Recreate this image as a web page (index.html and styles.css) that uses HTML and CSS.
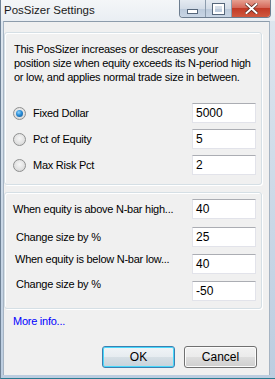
FILE: index.html
```html
<!DOCTYPE html>
<html lang="en">
<head>
    <meta charset="UTF-8">
    <title>PosSizer Settings</title>
    <link rel="stylesheet" href="styles.css">
</head>
<body>
    <div class="window">
        <div class="titlebar">
            <span class="title">PosSizer Settings</span>
            <div class="caption-buttons">
                <div class="cap-btn cap-min"><span class="min-glyph"></span></div>
                <div class="cap-btn cap-max"><span class="max-glyph"></span></div>
                <div class="cap-btn cap-close">
                    <svg width="13" height="11" viewBox="0 0 13 11">
                        <path d="M1.5 1 L11.5 10 M11.5 1 L1.5 10" stroke="#5a2a20" stroke-width="3.4" stroke-linecap="square"/>
                        <path d="M1.5 1 L11.5 10 M11.5 1 L1.5 10" stroke="#fff" stroke-width="2" stroke-linecap="square"/>
                    </svg>
                </div>
            </div>
        </div>

        <div class="client">
            <div class="group group-mode">
                <p class="description">This PosSizer increases or descreases your position size when equity exceeds its N-period high or low, and applies normal trade size in between.</p>

                <div class="row radio-row">
                    <span class="radio checked"></span>
                    <span class="label">Fixed Dollar</span>
                    <div class="textbox">5000</div>
                </div>
                <div class="row radio-row">
                    <span class="radio"></span>
                    <span class="label">Pct of Equity</span>
                    <div class="textbox">5</div>
                </div>
                <div class="row radio-row">
                    <span class="radio"></span>
                    <span class="label">Max Risk Pct</span>
                    <div class="textbox">2</div>
                </div>
            </div>

            <div class="group group-equity">
                <div class="row eq-row eq-high">
                    <span class="label">When equity is above N-bar high...</span>
                    <div class="textbox">40</div>
                </div>
                <div class="row eq-row eq-change">
                    <span class="label">Change size by %</span>
                    <div class="textbox">25</div>
                </div>
                <div class="row eq-row eq-low">
                    <span class="label">When equity is below N-bar low...</span>
                    <div class="textbox">40</div>
                </div>
                <div class="row eq-row eq-change2">
                    <span class="label">Change size by %</span>
                    <div class="textbox">-50</div>
                </div>
            </div>

            <a class="more-info" href="#">More info...</a>

            <div class="button-bar">
                <button class="btn btn-default">OK</button>
                <button class="btn">Cancel</button>
            </div>
        </div>
    </div>
</body>
</html>
```

FILE: styles.css
```css
body {
    margin: 0;
    padding: 0;
    font-family: 'Liberation Sans', Arial, sans-serif;
    font-size: 11px;
    letter-spacing: -0.25px;
    color: #000;
    background: #fff;
}

.window {
    width: 275px;
    height: 379px;
    box-sizing: border-box;
    background: linear-gradient(to bottom, #dfe7ef 0, #c9d7e6 60%, #bccde0 100%);
    border-left: 1px solid #6f8296;
    border-bottom: 1px solid #2a7a90;
    display: flex;
    flex-direction: column;
    padding: 0 5px 3px 2px;
}

/* title bar */

.titlebar {
    height: 21px;
    display: flex;
    justify-content: space-between;
    align-items: flex-start;
    background: linear-gradient(to bottom, #f4f6f8 0, #e9eef3 100%);
    margin: 0 -5px 0 -2px;
    padding-left: 3px;
}

.title {
    font-size: 11.5px;
    letter-spacing: 0;
    color: #1a1a1a;
    margin-top: 4px;
}

.caption-buttons {
    display: flex;
    margin-right: 4px;
    height: 17px;
    border: 1px solid #6d7d8f;
    border-top: none;
    border-radius: 0 0 4px 4px;
    overflow: hidden;
}

.cap-btn {
    height: 17px;
    display: flex;
    align-items: center;
    justify-content: center;
}

.cap-min,
.cap-max {
    width: 25px;
    background: linear-gradient(to bottom, #e4eaf1 0, #d3dce7 50%, #bccadb 51%, #c8d5e4 100%);
    border-right: 1px solid #8c9cad;
}

.cap-close {
    width: 38px;
    background: linear-gradient(to bottom, #e6a091 0, #d5695a 45%, #c23a26 50%, #d0593f 100%);
}

.min-glyph {
    width: 9px;
    height: 3px;
    margin-top: 5px;
    background: #fff;
    border: 1px solid #56677b;
}

.max-glyph {
    width: 7px;
    height: 6px;
    border: 2px solid #fff;
    border-top-width: 2px;
    outline: 1px solid #56677b;
}

/* dialog body */

.client {
    flex: 1;
    background: #f0f0f0;
    border-top: 1px solid #8d9cab;
    border-left: 1px solid #a6b4c3;
    border-right: 1px solid #a6b4c3;
    padding: 10px 7px 0 0;
    display: flex;
    flex-direction: column;
}

.group {
    border: 1px solid #d5dfe5;
    border-radius: 3px;
    box-shadow: inset 1px 1px 0 #fff, 1px 1px 0 #fff;
    padding: 0 5px 0 9px;
}

.group-mode {
    height: 153px;
    box-sizing: border-box;
    padding-top: 9px;
}

.description {
    margin: 0 0 19px 0;
    line-height: 14px;
}

.row {
    display: flex;
    align-items: center;
}

.label {
    flex: 1;
}

.textbox {
    width: 59px;
    height: 18px;
    line-height: 18px;
    padding-left: 3px;
    background: #fff;
    border: 1px solid #e2e3ea;
    border-top-color: #abadb3;
    font-size: 12px;
    letter-spacing: 0;
}

.radio-row {
    margin-bottom: 6px;
}

.radio {
    width: 11px;
    height: 11px;
    border-radius: 50%;
    border: 1px solid #8e8f8f;
    background: radial-gradient(circle at 50% 40%, #f6f6f6 0, #e0e0e0 60%, #cfcfcf 100%);
    margin: 0 7px 0 -1px;
    position: relative;
}

.radio.checked::after {
    content: '';
    position: absolute;
    left: 2px;
    top: 2px;
    width: 7px;
    height: 7px;
    border-radius: 50%;
    background: radial-gradient(circle at 40% 35%, #8fd5ff 0, #2a8cd6 45%, #0b4f8c 100%);
}

.group-equity {
    margin-top: 7px;
    height: 117px;
    box-sizing: border-box;
    padding: 6px 5px 0 8px;
}

.eq-row {
    margin-bottom: 8px;
}

.eq-change,
.eq-change2 {
    padding-left: 3px;
}

.eq-low {
    margin-top: -1px;
    align-items: flex-start;
}

.eq-low .label {
    margin-top: -1px;
    padding-left: 2px;
}

.eq-change2 {
    margin-top: -1px;
    align-items: flex-start;
}

.eq-change2 .label {
    margin-top: -3px;
}

.more-info {
    color: #0000ff;
    text-decoration: none;
    margin: 6px 0 0 9px;
}

.button-bar {
    display: flex;
    justify-content: flex-end;
    gap: 9px;
    margin: 19px 5px 0 0;
}

.btn {
    width: 73px;
    height: 22px;
    font-family: 'Liberation Sans', Arial, sans-serif;
    font-size: 12px;
    color: #000;
    border: 1px solid #707070;
    border-radius: 3px;
    background: linear-gradient(to bottom, #f2f2f2 0, #ebebeb 50%, #dddddd 51%, #cfcfcf 100%);
    box-shadow: inset 0 0 0 1px #fcfcfc;
    padding: 0;
}

.btn-default {
    border-color: #3c7fb1;
    box-shadow: inset 0 0 0 1px #48d8fb;
    background: linear-gradient(to bottom, #f0f4f7 0, #e6ecf0 50%, #d6dfe5 51%, #c6d3db 100%);
}
```
